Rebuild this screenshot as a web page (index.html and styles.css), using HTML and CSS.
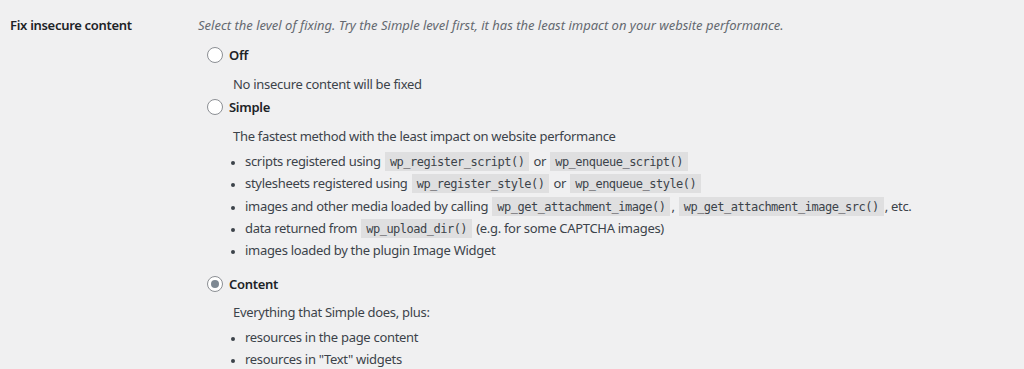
FILE: index.html
```html
<!DOCTYPE html>
<html lang="en">
<head>
    <meta charset="UTF-8">
    <meta name="viewport" content="width=device-width, initial-scale=1.0">
    <title>SSL Insecure Content Fixer settings</title>
    <link rel="stylesheet" href="styles.css">
</head>
<body>
    <div class="form-row">
        <div class="row-label">Fix insecure content</div>
        <div class="row-field">
            <p class="description">Select the level of fixing. Try the Simple level first, it has the least impact on your website performance.</p>

            <label class="radio-option opt-off">
                <input type="radio" name="fix_level" value="off">
                <span>Off</span>
            </label>
            <p class="level-desc">No insecure content will be fixed</p>

            <label class="radio-option opt-simple">
                <input type="radio" name="fix_level" value="simple">
                <span>Simple</span>
            </label>
            <p class="level-desc">The fastest method with the least impact on website performance</p>
            <ul class="level-list">
                <li>scripts registered using <code>wp_register_script()</code> or <code>wp_enqueue_script()</code></li>
                <li>stylesheets registered using <code>wp_register_style()</code> or <code>wp_enqueue_style()</code></li>
                <li class="gap-top">images and other media loaded by calling <code>wp_get_attachment_image()</code>, <code>wp_get_attachment_image_src()</code>, etc.</li>
                <li>data returned from <code>wp_upload_dir()</code> (e.g. for some CAPTCHA images)</li>
                <li>images loaded by the plugin Image Widget</li>
            </ul>

            <label class="radio-option opt-content">
                <input type="radio" name="fix_level" value="content" checked>
                <span>Content</span>
            </label>
            <p class="level-desc">Everything that Simple does, plus:</p>
            <ul class="level-list">
                <li>resources in the page content</li>
                <li>resources in "Text" widgets</li>
            </ul>
        </div>
    </div>
</body>
</html>
```

FILE: styles.css
```css
body {
    margin: 0;
    background-color: #f0f0f1;
    color: #3c434a;
    font-family: "Noto Sans", "Open Sans", sans-serif;
    font-size: 13px;
    line-height: 22px;
    letter-spacing: -0.3px;
    overflow: hidden;
}

.form-row {
    display: grid;
    grid-template-columns: 198px 1fr;
    padding-top: 14px;
}

.row-label {
    padding-left: 10px;
    font-weight: 600;
    color: #1d2327;
}

.row-field p {
    margin: 0;
}

.description {
    font-style: italic;
    color: #646970;
    letter-spacing: 0;
}

.radio-option {
    display: flex;
    align-items: center;
    gap: 6px;
    margin-left: 9px;
    font-weight: 600;
    color: #1d2327;
    cursor: pointer;
}

.radio-option input {
    appearance: none;
    -webkit-appearance: none;
    width: 16px;
    height: 16px;
    margin: 0;
    border: 1px solid #8c8f94;
    border-radius: 50%;
    background-color: #fff;
    box-sizing: border-box;
    display: flex;
    align-items: center;
    justify-content: center;
}

.radio-option input:checked::before {
    content: "";
    width: 8px;
    height: 8px;
    border-radius: 50%;
    background-color: #7e8993;
}

.opt-off {
    margin-top: 8px;
}

.opt-simple {
    margin-top: 1px;
}

.opt-content {
    margin-top: 12px;
}

.row-field .level-desc {
    margin: 6px 0 0 35px;
}

.opt-off + .level-desc,
.opt-simple + .level-desc {
    margin-top: 7px;
}

.level-list {
    margin: 3px 0 0 47px;
    padding: 0;
    list-style: disc;
}

.level-list li.gap-top {
    margin-top: 1px;
}

.level-list li::marker {
    font-size: 10px;
}

code {
    font-family: "DejaVu Sans Mono", monospace;
    font-size: 12px;
    line-height: 1;
    letter-spacing: -0.5px;
    padding: 3px 5px 2px;
    margin: 0 1px;
    background-color: rgba(0, 0, 0, 0.07);
    color: #3c434a;
}
```
